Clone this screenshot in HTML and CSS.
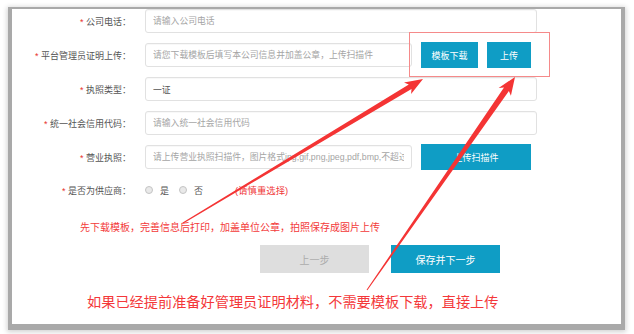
FILE: index.html
```html
<!DOCTYPE html>
<html lang="zh-CN">
<head>
  <meta charset="UTF-8" />
  <meta name="viewport" content="width=device-width, initial-scale=1.0"/>
  <title>企业信息</title>
  <link rel="stylesheet" href="styles.css">
</head>
<body>

  <div class="card">
    <div class="row">
      <label class="lbl"><span class="req">*</span> 公司电话：</label>
      <input class="field full" type="text" placeholder="请输入公司电话">
    </div>

    <div class="row">
      <label class="lbl"><span class="req">*</span> 平台管理员证明上传：</label>
      <input class="field short" type="text" placeholder="请您下载模板后填写本公司信息并加盖公章，上传扫描件">
      <button class="btn btn-sm">模板下载</button>
      <button class="btn btn-xs">上传</button>
    </div>

    <div class="row">
      <label class="lbl"><span class="req">*</span> 执照类型：</label>
      <input class="field full" type="text" value="一证">
    </div>

    <div class="row">
      <label class="lbl"><span class="req">*</span> 统一社会信用代码：</label>
      <input class="field full" type="text" placeholder="请输入统一社会信用代码">
    </div>

    <div class="row">
      <label class="lbl"><span class="req">*</span> 营业执照：</label>
      <input class="field short" type="text" placeholder="请上传营业执照扫描件，图片格式jpg,gif,png,jpeg,pdf,bmp,不超过5M">
      <button class="btn btn-wide">上传扫描件</button>
    </div>

    <div class="row radio-row">
      <label class="lbl"><span class="req">*</span> 是否为供应商：</label>
      <div class="radio-group">
        <span class="radio"></span><span class="opt">是</span>
        <span class="radio"></span><span class="opt">否</span>
        <span class="warn">(请慎重选择)</span>
      </div>
    </div>

    <p class="hint">先下载模板，完善信息后打印，加盖单位公章，拍照保存成图片上传</p>

    <div class="actions">
      <button class="btn-step prev">上一步</button>
      <button class="btn-step next">保存并下一步</button>
    </div>

    <p class="big-note">如果已经提前准备好管理员证明材料，不需要模板下载，直接上传</p>
  </div>

  <!-- annotation marks drawn over the screenshot -->
  <div class="mark-box"></div>
  <svg class="arrows" width="634" height="334" viewBox="0 0 634 334">
    <polygon points="182.7,222.6 408.8,84.6 404.0,82.5 423,79 411.1,94.0 411.5,88.9 183.3,223.4"/>
    <polygon points="366.6,289.7 504.0,87.6 498.6,87.9 515,77 510.9,95.7 508.9,91.0 367.4,290.3"/>
  </svg>

</body>
</html>
```

FILE: styles.css
```css
/* Base Reset */
* {
  margin: 0;
  padding: 0;
  box-sizing: border-box;
  font-family: "Liberation Sans", "Noto Sans CJK SC", sans-serif;
}

body {
  position: relative;
  width: 634px;
  height: 334px;
  padding: 9px 0 0 12px;
  background: #fff;
  overflow: hidden;
}

/* Screenshot card with its frame shadow */
.card {
  width: 609px;
  height: 315px;
  background: #fff;
  box-shadow: 0 2px 0 4px #a9a9a9, 0 3px 5px 5px rgba(0, 0, 0, 0.18);
}

/* Form rows */
.row {
  display: flex;
  align-items: center;
  height: 24px;
  margin-bottom: 10px;
}

.lbl {
  width: 119px;
  margin-right: 14px;
  text-align: right;
  font-size: 9px;
  color: #555;
  white-space: nowrap;
}

.req {
  color: #e8322e;
}

.field {
  height: 24px;
  border: 1px solid #e1e1e1;
  border-radius: 3px;
  padding: 0 7px;
  font-size: 8.8px;
  color: #555;
  background: #fff;
  outline: none;
  box-shadow: inset 0 1px 1px rgba(0, 0, 0, 0.03);
}

.field::placeholder {
  color: #a5a5a5;
}

.full {
  width: 392px;
}

.short {
  width: 267px;
}

/* Blue buttons */
.btn {
  height: 26px;
  margin-left: 9px;
  border: none;
  background: #0f9dc5;
  color: #fff;
  font-size: 9px;
}

.btn-sm {
  width: 57px;
}

.btn-xs {
  width: 44px;
}

.btn-wide {
  width: 110px;
}

/* Radio row */
.radio-row {
  height: 22px;
  margin-bottom: 0;
}

.radio-group {
  display: flex;
  align-items: center;
  font-size: 9px;
  color: #555;
}

.radio {
  width: 8px;
  height: 8px;
  border: 1px solid #c4c4c4;
  border-radius: 50%;
  background: #e9e9e9;
}

.opt {
  margin: 0 10px 0 7px;
}

.warn {
  margin-left: 22px;
  font-size: 9.4px;
  color: #f0393a;
}

/* Notes */
.hint {
  margin: 20px 0 0 68px;
  font-size: 10px;
  line-height: 14px;
  color: #f33a3a;
}

.actions {
  display: flex;
  gap: 22px;
  margin: 10px 0 0 248px;
}

.btn-step {
  width: 109px;
  height: 28px;
  border: none;
  font-size: 10px;
}

.prev {
  background: #dedede;
  color: #acacac;
}

.next {
  background: #0f9dc5;
  color: #fff;
}

.big-note {
  margin: 19px 0 0 75px;
  font-size: 14.2px;
  line-height: 20px;
  color: #f4383a;
}

/* Annotation marks */
.mark-box {
  position: absolute;
  left: 409px;
  top: 32px;
  width: 141px;
  height: 45px;
  border: 1px solid #f58a8a;
}

.arrows {
  position: absolute;
  left: 0;
  top: 0;
  fill: #f43434;
  pointer-events: none;
}
```
